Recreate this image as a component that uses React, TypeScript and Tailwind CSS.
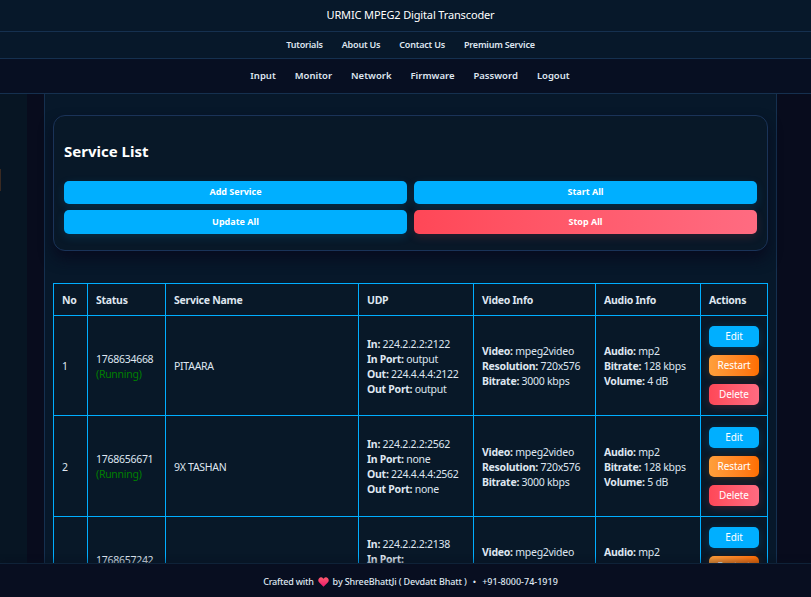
import React from 'react';

const topLinks = ['Tutorials', 'About Us', 'Contact Us', 'Premium Service'];
const mainLinks = ['Input', 'Monitor', 'Network', 'Firmware', 'Password', 'Logout'];

const services = [
  { no: 1, stamp: '1768634668', name: 'PITAARA', inAddr: '224.2.2.2:2122', inPort: 'output', out: '224.4.4.4:2122', outPort: 'output', volume: '4 dB', height: 'h-[100px]' },
  { no: 2, stamp: '1768656671', name: '9X TASHAN', inAddr: '224.2.2.2:2562', inPort: 'none', out: '224.4.4.4:2562', outPort: 'none', volume: '5 dB', height: 'h-[101px]' },
];

const Info = ({ label, value }: { label: string; value?: string }) => (
  <div>
    <b className="font-bold">{label}:</b> {value}
  </div>
);

// a line that sits behind the fixed footer
const Blank = () => <div className="h-[15px]" />;

const th = 'border border-[#00aeff] pl-[8px] pr-[4px] text-left font-bold';
const td = 'border border-[#00aeff] pl-[8px] pr-[4px] pt-[2px] align-middle';
const tdFlush = 'border border-[#00aeff] pl-[8px] pr-[4px] align-middle';
const smallBtn = 'flex h-[21px] w-[50px] items-center justify-center rounded-[5px] text-[10px] tracking-[-0.1px] text-white';

const Actions = () => (
  <div className="flex flex-col gap-[8px]">
    <button className={`${smallBtn} bg-[#00afff] shadow-[0_2px_8px_rgba(0,175,255,0.2)]`}>Edit</button>
    <button className={`${smallBtn} bg-gradient-to-r from-[#ff9f3a] to-[#ff6f00] shadow-[0_2px_8px_rgba(255,120,0,0.2)]`}>Restart</button>
    <button className={`${smallBtn} bg-gradient-to-r from-[#ff4757] to-[#ff6b81] shadow-[0_2px_8px_rgba(255,71,87,0.2)]`}>Delete</button>
  </div>
);

const App: React.FC = () => {
  return (
    <div className="relative flex h-screen flex-col overflow-hidden bg-[#080c1d] font-['Noto_Sans',sans-serif] text-[#dfe6f0]">
      <header className="shrink-0">
        <div className="flex h-[32px] items-center justify-center border-b border-[#15304f] bg-[#07182a] pl-[10px] text-[11px] tracking-[-0.14px] text-white">
          URMIC MPEG2 Digital Transcoder
        </div>
        <nav className="flex h-[27px] items-center justify-center gap-[19px] border-b border-[#15304f] bg-[#07182a] pl-[10px] text-[9px] font-semibold tracking-[-0.2px]">
          {topLinks.map((l) => (
            <span key={l}>{l}</span>
          ))}
        </nav>
        <nav className="flex h-[35px] items-center justify-center gap-[19px] border-b border-[#15304f] bg-[#070f22] pl-[9px] pt-[1px] text-[9.5px] font-semibold">
          {mainLinks.map((l) => (
            <span key={l}>{l}</span>
          ))}
        </nav>
      </header>

      <main className="relative min-h-0 flex-1 overflow-hidden">
        {/* strip of the page background showing on the left */}
        <div className="absolute bottom-0 left-0 top-0 w-[27px] bg-[#071523]">
          <div className="absolute left-0 top-[75px] h-[22px] w-[1px] bg-[#3a2a22]" />
        </div>
        <div className="relative ml-[44px] h-full w-[733px] border-x border-[#15304f] bg-[#07182a] px-[8px] pt-[21px]">
          <section className="rounded-[12px] border border-[#1a3358] bg-[#081828] px-[10px] pb-[16px] shadow-[0_8px_14px_rgba(8,10,30,0.9)]">
            <h2 className="flex h-[65px] items-center pt-[6px] text-[15px] font-bold text-white">Service List</h2>
            <div className="grid grid-cols-2 gap-x-[7px] gap-y-[6px] text-[9px] font-bold text-white">
              <button className="flex h-[23px] items-center justify-center rounded-[5px] bg-[#00afff] pb-[1px] shadow-[0_3px_10px_rgba(0,175,255,0.15)]">Add Service</button>
              <button className="flex h-[23px] items-center justify-center rounded-[5px] bg-[#00afff] pb-[1px] shadow-[0_3px_10px_rgba(0,175,255,0.15)]">Start All</button>
              <button className="flex h-[24px] items-center justify-center rounded-[5px] bg-[#00afff] shadow-[0_3px_10px_rgba(0,175,255,0.15)]">Update All</button>
              <button className="flex h-[24px] items-center justify-center rounded-[5px] bg-gradient-to-r from-[#ff4757] to-[#ff6b81] shadow-[0_3px_10px_rgba(255,71,87,0.15)]">Stop All</button>
            </div>
          </section>

          <table className="mt-[32px] w-[714px] table-fixed border-collapse bg-[#081828] text-[10.5px] leading-[15px] tracking-[-0.27px]">
            <colgroup>
              <col className="w-[34px]" />
              <col className="w-[78px]" />
              <col className="w-[193px]" />
              <col className="w-[115px]" />
              <col className="w-[122px]" />
              <col className="w-[105px]" />
              <col className="w-[67px]" />
            </colgroup>
            <thead>
              <tr className="h-[32px]">
                <th className={`${th} pt-[2px]`}>No</th>
                <th className={`${th} pt-[2px]`}>Status</th>
                <th className={`${th} pt-[2px]`}>Service Name</th>
                <th className={`${th} pt-[2px]`}>UDP</th>
                <th className={`${th} pt-[2px]`}>Video Info</th>
                <th className={`${th} pt-[2px]`}>Audio Info</th>
                <th className={`${th} pt-[2px]`}>Actions</th>
              </tr>
            </thead>
            <tbody>
              {services.map((s) => (
                <tr key={s.no} className={s.height}>
                  <td className={td}>{s.no}</td>
                  <td className={td}>
                    <div>{s.stamp}</div>
                    <div className="text-[#008000]">(Running)</div>
                  </td>
                  <td className={td}>{s.name}</td>
                  <td className={td}>
                    <Info label="In" value={s.inAddr} />
                    <Info label="In Port" value={s.inPort} />
                    <Info label="Out" value={s.out} />
                    <Info label="Out Port" value={s.outPort} />
                  </td>
                  <td className={td}>
                    <Info label="Video" value="mpeg2video" />
                    <Info label="Resolution" value="720x576" />
                    <Info label="Bitrate" value="3000 kbps" />
                  </td>
                  <td className={td}>
                    <Info label="Audio" value="mp2" />
                    <Info label="Bitrate" value="128 kbps" />
                    <Info label="Volume" value={s.volume} />
                  </td>
                  <td className={tdFlush}>
                    <Actions />
                  </td>
                </tr>
              ))}
              {/* third row runs under the footer, only its top part shows */}
              <tr className="h-[101px]">
                <td className={td} />
                <td className={td}>
                  <div>1768657242</div>
                  <Blank />
                </td>
                <td className={td} />
                <td className={tdFlush}>
                  <Info label="In" value="224.2.2.2:2138" />
                  <Info label="In Port" />
                  <Blank />
                  <Blank />
                </td>
                <td className={tdFlush}>
                  <Info label="Video" value="mpeg2video" />
                  <Blank />
                  <Blank />
                </td>
                <td className={tdFlush}>
                  <Info label="Audio" value="mp2" />
                  <Blank />
                  <Blank />
                </td>
                <td className={`${tdFlush} pb-[2px]`}>
                  <Actions />
                </td>
              </tr>
            </tbody>
          </table>
        </div>
      </main>

      <footer className="absolute bottom-0 left-0 right-0 flex h-[34px] items-center justify-center gap-[3px] border-t border-[#0f2238] bg-[#080e20] pl-[10px] pt-[2px] text-[9px] font-medium shadow-[0_-3px_5px_rgba(8,14,32,0.35)]">
        <span className="tracking-[-0.22px]">Crafted with</span>
        <svg width="11" height="10" viewBox="0 0 24 22" className="mx-[1px]">
          <defs>
            <linearGradient id="heart" x1="0" y1="0" x2="0" y2="1">
              <stop offset="0" stopColor="#ff5a6e" />
              <stop offset="1" stopColor="#e8186c" />
            </linearGradient>
          </defs>
          <path
            fill="url(#heart)"
            d="M12 21.5 2.6 12C-.2 9.1-.2 5 2.3 2.5c2.6-2.6 6.7-2.3 9.1.6l.6.8.6-.8c2.4-2.9 6.5-3.2 9.1-.6 2.5 2.5 2.5 6.6-.3 9.5z"
          />
        </svg>
        <span className="tracking-[-0.12px]">by ShreeBhattJi ( Devdatt Bhatt )</span>
        <span className="mx-[3px]">•</span>
        <span>+91-8000-74-1919</span>
      </footer>
    </div>
  );
};

export default App;
